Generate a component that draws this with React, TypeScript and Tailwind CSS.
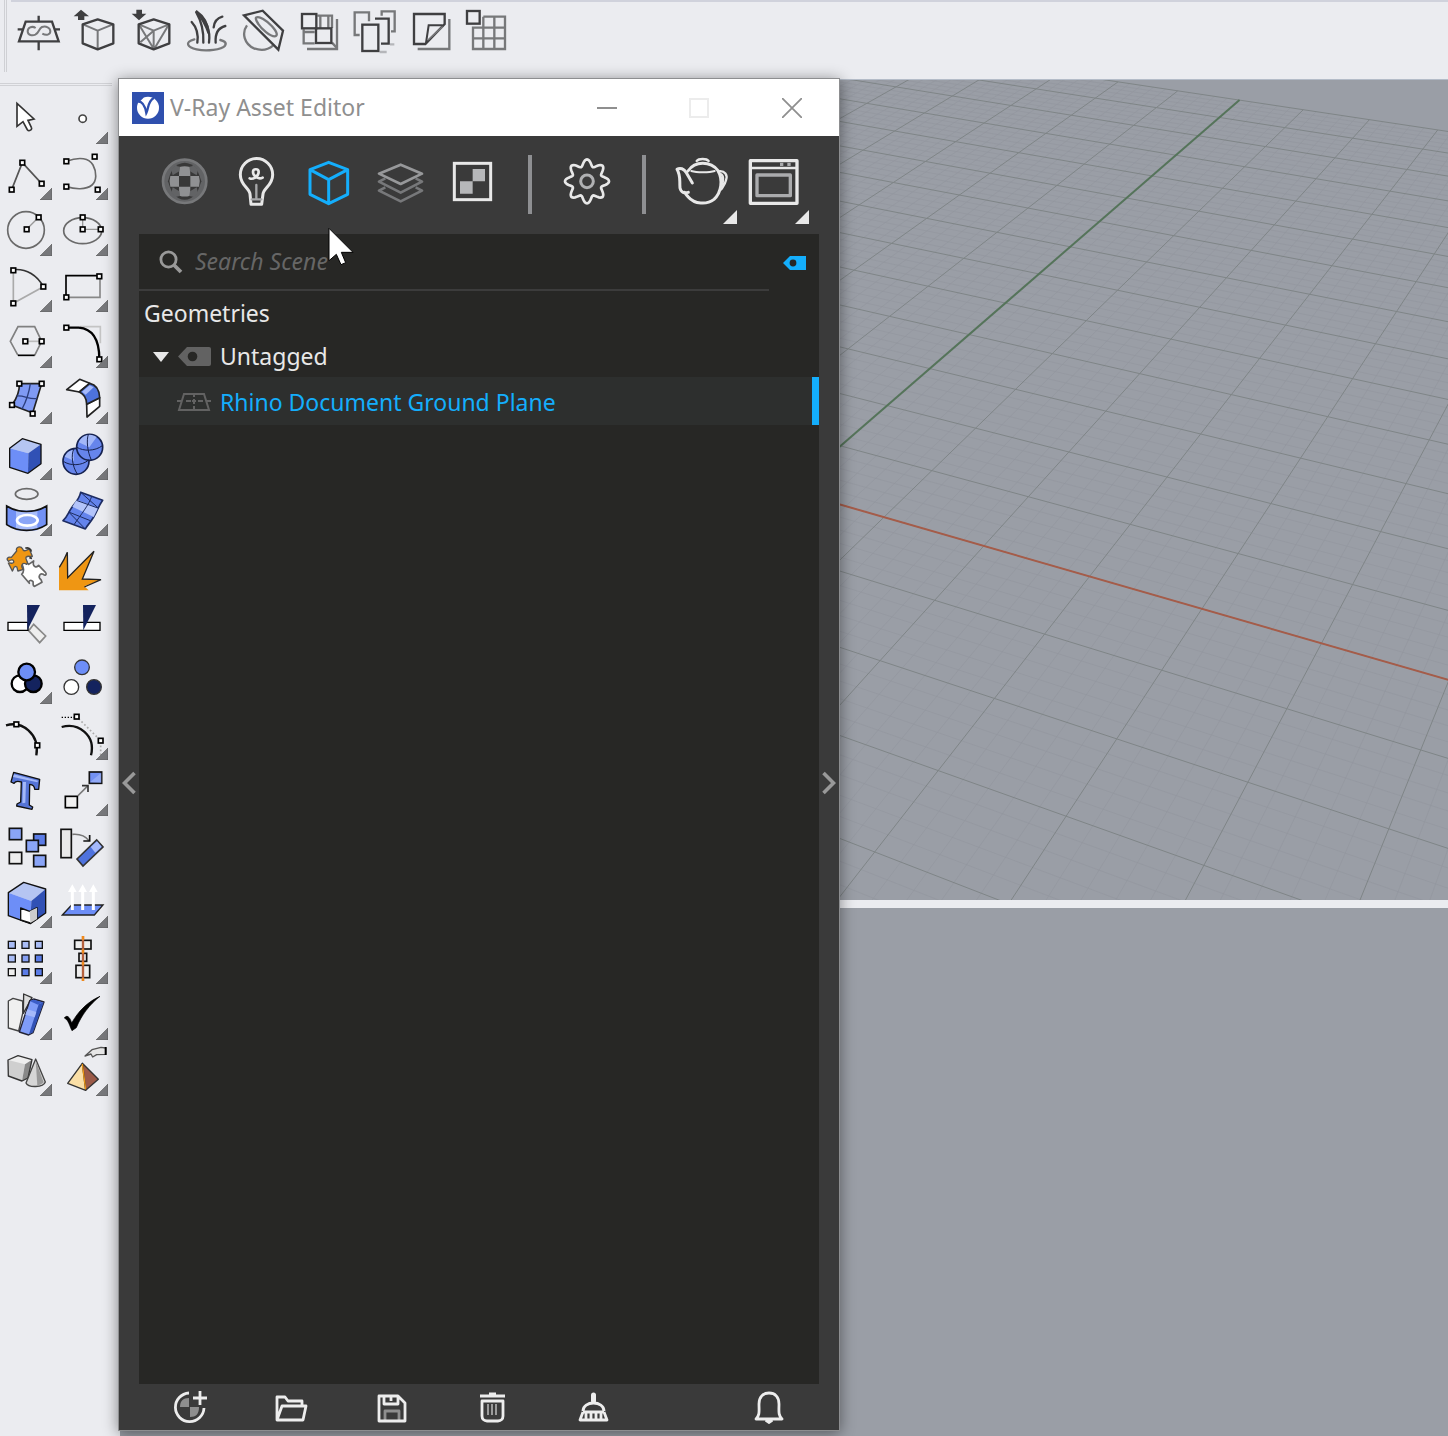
import type { ReactNode } from 'react';

type Tool = {
  label: string;
  box: string;
  art: ReactNode;
  menu?: boolean;
};

const DARK = '#3f3f41';
const MID = '#77787a';

const Handle = ({ x, y }: { x: number; y: number }) => (
  <rect x={x - 7} y={y - 7} width={14} height={14} fill="#fff" stroke="#000" strokeWidth={5} />
);

// Icons of the V-Ray toolbar, drawn at three units per pixel
const topTools: Tool[] = [
  {
    label: 'Infinite plane',
    box: '33 12 168 168',
    art: (
      <g fill="none" stroke={DARK} strokeWidth={7}>
        <path d="M77 65H156L176 124H57ZM116 47V65M116 124V151M53 88H70M163 88H180" />
        <path d="M107 84C95 76 83 84 83 94C83 106 97 108 106 104C118 98 116 86 126 81C138 77 151 83 151 94C151 104 139 108 127 101" stroke={MID} strokeWidth={6} />
      </g>
    ),
  },
  {
    label: 'Export proxy',
    box: '201 12 168 168',
    art: (
      <g fill="none" stroke={DARK} strokeWidth={7} strokeLinejoin="round">
        <path d="M293 92V146M249 73L293 92L339 73" stroke={MID} strokeWidth={6} />
        <path d="M293 58L340 73V130L293 148L248 130V73Z" />
        <path d="M243 29L267 49H253V60H234V49H221Z" fill={DARK} stroke="none" />
      </g>
    ),
  },
  {
    label: 'Import proxy',
    box: '369 12 168 168',
    art: (
      <g fill="none" stroke={DARK} strokeWidth={7} strokeLinejoin="round">
        <path d="M461 92V146M417 73L461 92L507 73L463 146M419 77L461 146M461 92L421 127" stroke={MID} strokeWidth={6} />
        <path d="M461 58L508 73V130L461 148L416 130V73Z" />
        <path d="M417 61L395 41H409V29H426V41H439Z" fill={DARK} stroke="none" />
      </g>
    ),
  },
  {
    label: 'Fur',
    box: '537 12 168 168',
    art: (
      <g fill="none" stroke={DARK} strokeWidth={7} strokeLinecap="round">
        <path d="M583 118C552 126 562 142 590 148C620 155 665 149 675 137C682 126 669 122 661 120" stroke={MID} />
        <path d="M575 66C590 82 596 100 592 128M610 128C612 90 602 60 588 35C617 58 632 90 627 128M641 82C643 62 653 54 667 50M647 128C645 100 656 83 676 78" />
        <path d="M588 33C610 48 624 68 626 100C617 74 606 54 588 33Z" fill={DARK} />
      </g>
    ),
  },
  {
    label: 'Clipper',
    box: '705 12 168 168',
    art: (
      <g fill="none" stroke={DARK} strokeWidth={7}>
        <path d="M741 76C724 99 733 132 762 145C786 154 807 147 819 137" stroke={MID} />
        <path d="M732 46L788 32L849 92L835 149Z" />
        <path d="M768 53C777 47 800 61 816 79C831 96 835 107 824 109C810 109 785 88 775 72C769 63 766 57 768 53Z" stroke={MID} />
      </g>
    ),
  },
  {
    label: 'Decal',
    box: '873 12 168 168',
    art: (
      <g fill="none" stroke={MID} strokeWidth={7}>
        <path d="M952 47H996V84M961 47V84M911 88V130H944M911 96H944M1011 57V147H921" />
        <path d="M985 47V84M996 128L1009 142" />
        <g stroke={DARK}>
          <rect x={906} y={42} width={43} height={43} />
          <rect x={948} y={85} width={46} height={44} />
        </g>
      </g>
    ),
  },
  {
    label: 'Scatter',
    box: '1041 12 168 168',
    art: (
      <g fill="none" stroke={MID} strokeWidth={7}>
        <path d="M1107 64V37H1064V105H1079M1145 47V34H1184V94H1173" />
        <path d="M1139 156H1160M1170 133H1183" stroke="#b5b6ba" />
        <path d="M1125 56H1166V131H1143" stroke={DARK} />
        <rect x={1087} y={74} width={48} height={79} stroke={DARK} />
      </g>
    ),
  },
  {
    label: 'Instance UVW',
    box: '1209 12 168 168',
    art: (
      <g fill="none" stroke={MID} strokeWidth={7}>
        <path d="M1348 57V147H1253" />
        <path d="M1334 42V72L1276 132H1242V42Z" stroke={DARK} />
        <path d="M1328 76H1286L1278 129" stroke={DARK} strokeWidth={6} />
        <path d="M1328 80L1284 120" strokeWidth={5} />
      </g>
    ),
  },
  {
    label: 'Mesh grid',
    box: '1377 12 168 168',
    art: (
      <g fill="none" stroke={MID} strokeWidth={7}>
        <path d="M1450 50H1515V147H1419V83H1515M1450 50V147M1483 50V147M1419 115H1515" />
        <rect x={1401} y={33} width={38} height={38} stroke={DARK} />
      </g>
    ),
  },
];

// Modelling palette, two columns, drawn at three units per pixel
const sideTools: Tool[] = [
  {
    label: 'Select',
    box: '0 9 168 168',
    art: <path d="M51 55V124L69 110L82 134C87 140 98 134 94 127L84 106L102 102Z" fill="#fff" stroke="#333" strokeWidth={5} />,
  },
  {
    label: 'Point',
    box: '168 9 168 168',
    menu: true,
    art: <circle cx={248} cy={101} r={11} fill="#fff" stroke="#444" strokeWidth={5} />,
  },
  {
    label: 'Polyline',
    box: '0 177 168 168',
    menu: true,
    art: (
      <>
        <path d="M35 314L67 233L125 296" fill="none" stroke="#555" strokeWidth={5} />
        <Handle x={35} y={314} /><Handle x={67} y={233} /><Handle x={125} y={296} />
      </>
    ),
  },
  {
    label: 'Curve',
    box: '168 177 168 168',
    menu: true,
    art: (
      <>
        <path d="M199 229C240 214 268 220 279 240C291 262 290 288 276 300C258 315 225 313 199 305" fill="none" stroke="#6a6a6a" strokeWidth={5} />
        <Handle x={199} y={229} /><Handle x={284} y={215} /><Handle x={199} y={305} /><Handle x={293} y={314} />
      </>
    ),
  },
  {
    label: 'Circle',
    box: '0 345 168 168',
    menu: true,
    art: (
      <>
        <circle cx={78} cy={435} r={55} fill="none" stroke="#6a6a6a" strokeWidth={5} />
        <path d="M80 433L116 397" stroke="#999" strokeWidth={4} />
        <Handle x={80} y={433} /><Handle x={116} y={397} />
      </>
    ),
  },
  {
    label: 'Ellipse',
    box: '168 345 168 168',
    menu: true,
    art: (
      <>
        <ellipse cx={248} cy={437} rx={57} ry={39} fill="none" stroke="#6a6a6a" strokeWidth={5} />
        <path d="M248 397V433H302" fill="none" stroke="#999" strokeWidth={4} />
        <Handle x={248} y={397} /><Handle x={248} y={433} /><Handle x={302} y={433} />
      </>
    ),
  },
  {
    label: 'Arc',
    box: '0 513 168 168',
    menu: true,
    art: (
      <>
        <path d="M40 556V655L130 605" fill="none" stroke="#aaa" strokeWidth={5} />
        <path d="M40 554C80 550 112 572 130 605" fill="none" stroke="#333" strokeWidth={5} />
        <Handle x={40} y={556} /><Handle x={40} y={655} /><Handle x={130} y={605} />
      </>
    ),
  },
  {
    label: 'Rectangle',
    box: '168 513 168 168',
    menu: true,
    art: (
      <>
        <path d="M199 637H300V574" fill="none" stroke="#888" strokeWidth={5} />
        <path d="M198 637V572H299" fill="none" stroke="#000" strokeWidth={5} />
        <Handle x={298} y={574} /><Handle x={199} y={637} />
      </>
    ),
  },
  {
    label: 'Polygon',
    box: '0 6 168 168',
    menu: true,
    art: (
      <>
        <path d="M104 136L125 94L104 50H54L31 94L54 136" fill="none" stroke="#808080" strokeWidth={5} />
        <path d="M54 136H104" stroke="#000" strokeWidth={5} />
        <path d="M76 94H125" stroke="#bbb" strokeWidth={5} />
        <Handle x={76} y={94} /><Handle x={125} y={94} />
      </>
    ),
  },
  {
    label: 'Fillet',
    box: '168 6 168 168',
    menu: true,
    art: (
      <>
        <path d="M240 50H301V100" fill="none" stroke="#c4c4c4" strokeWidth={5} />
        <path d="M199 53H236C276 56 298 88 298 147" fill="none" stroke="#000" strokeWidth={7} />
        <Handle x={199} y={53} /><Handle x={298} y={148} />
      </>
    ),
  },
  {
    label: 'Surface from points',
    box: '0 174 168 168',
    menu: true,
    art: (
      <>
        <path d="M58 221H125L98 309L36 285C50 265 59 245 58 221Z" fill="#7f9af4" stroke="#222" strokeWidth={5} />
        <path d="M91 221C87 250 78 275 66 297M50 258C72 255 90 270 112 265" fill="none" stroke="#2b3d7c" strokeWidth={4} />
        <Handle x={58} y={221} /><Handle x={125} y={221} /><Handle x={36} y={285} /><Handle x={98} y={311} />
      </>
    ),
  },
  {
    label: 'Fillet surface',
    box: '168 174 168 168',
    menu: true,
    art: (
      <g stroke="#222" strokeWidth={5} strokeLinejoin="round">
        <path d="M200 239L239 208L269 220L238 246Z" fill="#fff" />
        <path d="M260 283L299 263V289L261 321Z" fill="#fff" />
        <path d="M238 246L269 220C288 224 298 240 299 263L260 283C260 266 253 253 238 246Z" fill="#4d72dc" />
        <path d="M246 245L269 226L281 232L257 254Z" fill="#a5b9fa" stroke="none" />
      </g>
    ),
  },
  {
    label: 'Box',
    box: '0 342 168 168',
    menu: true,
    art: (
      <g strokeLinejoin="round">
        <path d="M29 415L67 386L123 403L85 430Z" fill="#b5c5f2" />
        <path d="M29 415L85 430L84 490L29 472Z" fill="#6d8ef7" />
        <path d="M85 430L123 403V461L84 490Z" fill="#3151b5" />
        <path d="M67 386L123 403V461L84 490L29 472V415Z" fill="none" stroke="#111" strokeWidth={4} />
      </g>
    ),
  },
  {
    label: 'Boolean union',
    box: '168 342 168 168',
    menu: true,
    art: (
      <g stroke="#16224f" strokeWidth={5}>
        <circle cx={228} cy={454} r={39} fill="#6685ec" />
        <circle cx={269} cy={412} r={39} fill="#6685ec" />
        <path d="M236 397A36 36 0 0 1 290 381L268 412ZM194 440A36 36 0 0 1 220 419L222 452Z" fill="#a3b8f8" stroke="none" />
        <path d="M231 412C250 424 285 424 307 407M265 373C259 392 262 424 274 450M190 454C210 468 245 468 266 450M222 416C212 434 217 470 232 492" fill="none" strokeWidth={3} />
      </g>
    ),
  },
  {
    label: 'Project curve',
    box: '0 510 168 168',
    menu: true,
    art: (
      <g>
        <ellipse cx={80} cy={552} rx={34} ry={16} fill="none" stroke="#6a6a6a" strokeWidth={5} />
        <path d="M20 588C54 610 105 610 140 588V644C105 667 54 667 20 644Z" fill="#7291f5" />
        <path d="M48 600H112V661C91 665 67 665 48 661Z" fill="#a7bcfb" />
        <path d="M20 588C54 610 105 610 140 588V644C105 667 54 667 20 644Z" fill="none" stroke="#111" strokeWidth={5} />
        <ellipse cx={82} cy={631} rx={31} ry={16} fill="#8aa5f7" stroke="#fff" strokeWidth={8} />
      </g>
    ),
  },
  {
    label: 'Patch surface',
    box: '168 510 168 168',
    menu: true,
    art: (
      <g stroke="#1d2c62" strokeWidth={5} strokeLinejoin="round">
        <path d="M242 547L308 571C296 588 292 602 281 621C269 641 262 645 256 657L189 632C203 620 205 606 217 590C231 572 238 566 242 547Z" fill="#6484ec" />
        <path d="M217 590L281 621L294 594L230 569Z" fill="#b3c4fa" stroke="none" />
        <path d="M275 559C268 583 242 615 222 644M229 571L296 595M206 606L271 632M242 547L296 595M207 607L256 657" fill="none" strokeWidth={3} />
      </g>
    ),
  },
  {
    label: 'Join',
    box: '0 3 168 168',
    art: (
      <g strokeWidth={5} strokeLinejoin="round">
        <path d="M66 88C61 79 72 73 80 82L86 88L101 78C96 96 110 99 116 91L137 113C141 118 136 124 130 118C120 113 112 126 123 134L126 142L104 154C96 152 101 145 99 140C92 132 84 138 88 145L65 118C72 111 74 103 66 88Z" fill="#fff" stroke="#666" />
        <path d="M50 48C45 36 62 31 68 42C71 52 79 45 88 42L97 64C90 66 85 60 78 67C75 76 88 82 80 88C68 80 60 91 70 103L54 108C50 103 55 96 47 94C38 94 43 103 37 108L25 84C32 81 35 89 41 82C43 74 34 72 26 79C17 73 23 64 34 67Z" fill="#ef9613" stroke="#555" strokeWidth={4} />
        <path d="M76 40C84 36 93 42 94 50M88 68L96 70" fill="none" stroke="#333" />
      </g>
    ),
  },
  {
    label: 'Explode',
    box: '168 3 168 168',
    art: (
      <g>
        <path d="M177 166V99C188 84 196 68 202 52L203 128L282 49L247 132L303 134L253 154L266 166Z" fill="#ef9613" />
        <path d="M178 97C188 82 196 68 202 52L203 128L282 49L247 132L303 134L253 156" fill="none" stroke="#222" strokeWidth={4} />
      </g>
    ),
  },
  {
    label: 'Trim',
    box: '0 171 168 168',
    art: (
      <g>
        <path d="M86 287L101 268L137 303L119 323Z" fill="#eee" stroke="#888" strokeWidth={5} />
        <path d="M24 262H84V286H24Z" fill="#fff" stroke="#000" strokeWidth={4} />
        <path d="M81 210H120L82 286Z" fill="#14235e" />
      </g>
    ),
  },
  {
    label: 'Split',
    box: '168 171 168 168',
    art: (
      <g>
        <path d="M192 262H300V286H192Z" fill="#fff" stroke="#000" strokeWidth={4} />
        <path d="M249 210H288L250 286Z" fill="#14235e" />
      </g>
    ),
  },
  {
    label: 'Group',
    box: '0 339 168 168',
    menu: true,
    art: (
      <g stroke="#000" strokeWidth={7}>
        <circle cx={60} cy={446} r={25} fill="#fff" />
        <circle cx={100} cy={446} r={25} fill="#14235e" />
        <circle cx={80} cy={411} r={25} fill="#6d8ef7" />
      </g>
    ),
  },
  {
    label: 'Ungroup',
    box: '168 339 168 168',
    art: (
      <g stroke="#333" strokeWidth={4}>
        <circle cx={246} cy={397} r={22} fill="#6d8ef7" />
        <circle cx={214} cy={456} r={22} fill="#fff" />
        <circle cx={282} cy={456} r={22} fill="#14235e" />
      </g>
    ),
  },
  {
    label: 'Edit points',
    box: '0 507 168 168',
    art: (
      <>
        <path d="M18 571C65 557 120 595 109 661" fill="none" stroke="#111" strokeWidth={7} />
        <Handle x={49} y={568} /><Handle x={112} y={631} />
      </>
    ),
  },
  {
    label: 'Control points',
    box: '168 507 168 168',
    menu: true,
    art: (
      <>
        <path d="M185 576C235 562 288 600 273 661" fill="none" stroke="#111" strokeWidth={7} />
        <path d="M185 547H225" stroke="#000" strokeWidth={4} strokeDasharray="4 5" />
        <path d="M236 551L302 617V660" fill="none" stroke="#aaa" strokeWidth={5} strokeDasharray="5 7" />
        <Handle x={230} y={545} /><Handle x={302} y={617} />
      </>
    ),
  },
  {
    label: 'Text',
    box: '0 0 168 168',
    art: (
      <g strokeLinejoin="round">
        <path d="M41 37L119 58L116 88L104 88C104 77 98 74 89 73L88 135L98 141L96 148L50 138L51 132L62 126L64 66C52 62 46 63 42 70L33 66Z" fill="#5574d6" stroke="#111" strokeWidth={4} />
        <path d="M42 43L114 62L112 67L39 51ZM69 66H78L76 128L67 130Z" fill="#a3b8f8" />
      </g>
    ),
  },
  {
    label: 'Move',
    box: '168 0 168 168',
    menu: true,
    art: (
      <g strokeWidth={5}>
        <rect x={196} y={109} width={36} height={34} fill="#f0f0f0" stroke="#000" />
        <rect x={268} y={36} width={37} height={34} fill="#7391f3" stroke="#111" />
        <path d="M270 67L304 38V68Z" fill="#a5b9fa" opacity={0.6} />
        <path d="M233 108L264 77" stroke="#777" />
        <path d="M246 77H264V96" fill="none" stroke="#333" />
      </g>
    ),
  },
  {
    label: 'Copy',
    box: '0 168 168 168',
    art: (
      <g stroke="#111" strokeWidth={5}>
        <rect x={28} y={205} width={37} height={34} fill="#8aa5f7" />
        <rect x={101} y={222} width={36} height={34} fill="#5b7ce6" />
        <rect x={79} y={241} width={36} height={34} fill="#8aa5f7" />
        <rect x={28} y={277} width={37} height={34} fill="#eee" />
        <rect x={101} y={286} width={36} height={34} fill="#8aa5f7" />
      </g>
    ),
  },
  {
    label: 'Rotate',
    box: '168 168 168 168',
    art: (
      <g strokeWidth={5}>
        <rect x={183} y={208} width={31} height={85} fill="#e9e9e9" stroke="#111" />
        <path d="M217 223C240 221 258 230 267 242" fill="none" stroke="#777" />
        <path d="M269 225V243H250" fill="none" stroke="#111" />
        <path d="M231 297L290 240L309 261L249 318Z" fill="#4f73de" stroke="#333" />
        <path d="M272 261L291 244L305 260L286 278Z" fill="#a5b9fa" />
      </g>
    ),
  },
  {
    label: 'Solid tools',
    box: '0 336 168 168',
    menu: true,
    art: (
      <g strokeLinejoin="round">
        <path d="M25 398L71 367L137 387L94 423Z" fill="#b5c5f2" />
        <path d="M25 398L94 423L91 491L25 467Z" fill="#6d8ef7" />
        <path d="M94 423L137 387V459L91 491Z" fill="#3151b5" />
        <path d="M71 367L137 387V459L91 491L25 467V398Z" fill="none" stroke="#111" strokeWidth={4} />
        <path d="M62 444L89 454L111 443V477L91 489L62 480Z" fill="#fff" stroke="#111" strokeWidth={4} />
        <path d="M89 454L111 443V477L91 489Z" fill="#ccc" />
      </g>
    ),
  },
  {
    label: 'Extrude',
    box: '168 336 168 168',
    menu: true,
    art: (
      <g>
        <path d="M187 465L215 435H309L283 465Z" fill="#6d8ef7" stroke="#222" strokeWidth={4} />
        <path d="M217 450V392M248 450V392M280 450V392" stroke="#fff" strokeWidth={9} />
        <path d="M204 396L217 373L230 396ZM235 396L248 373L261 396ZM267 396L280 373L293 396Z" fill="#fff" />
      </g>
    ),
  },
  {
    label: 'Array',
    box: '0 -6 168 168',
    menu: true,
    art: (
      <g stroke="#111" strokeWidth={4} fill="#a9bcf5">
        <rect x={25} y={34} width={21} height={21} /><rect x={66} y={34} width={21} height={21} /><rect x={106} y={34} width={21} height={21} />
        <rect x={25} y={75} width={21} height={21} /><rect x={66} y={75} width={21} height={21} fill="#86a0f3" /><rect x={106} y={75} width={21} height={21} fill="#5b7ce6" />
        <rect x={25} y={116} width={21} height={21} fill="#eee" /><rect x={66} y={116} width={21} height={21} fill="#5b7ce6" /><rect x={106} y={116} width={21} height={21} fill="#5b7ce6" />
      </g>
    ),
  },
  {
    label: 'Align',
    box: '168 -6 168 168',
    menu: true,
    art: (
      <g fill="#eee" stroke="#111" strokeWidth={5}>
        <rect x={224} y={31} width={49} height={26} /><rect x={237} y={70} width={23} height={24} /><rect x={228} y={106} width={41} height={37} />
        <path d="M249 18V153" stroke="#b5613e" strokeWidth={7} />
        <path d="M249 18V30M249 58V70M249 95V106M249 144V153" stroke="#f08a1c" strokeWidth={7} />
      </g>
    ),
  },
  {
    label: 'Bend',
    box: '0 162 168 168',
    menu: true,
    art: (
      <g strokeWidth={4} strokeLinejoin="round">
        <path d="M71 192L96 203L70 250Z" fill="#ddd" stroke="#333" />
        <path d="M25 213L39 205L68 213V250L56 303L25 294Z" fill="#f0f0f0" stroke="#444" />
        <path d="M89 212L101 207L132 216L99 308L86 315L58 306Z" fill="#7f9cf7" stroke="#223" />
        <path d="M116 223L131 217L99 307L87 313Z" fill="#3151b5" />
        <path d="M89 213L101 209L128 217L114 224Z" fill="#3c5ec8" />
        <path d="M82 238L109 246L104 262L76 254Z" fill="#a5b9fa" />
      </g>
    ),
  },
  {
    label: 'Check',
    box: '168 162 168 168',
    menu: true,
    art: <path d="M193 264C200 254 209 259 215 279C235 243 265 214 300 199C269 223 244 256 229 293L216 302C209 289 206 270 193 264Z" fill="#000" stroke="#000" strokeWidth={2} />,
  },
  {
    label: 'Render solids',
    box: '0 330 168 168',
    menu: true,
    art: (
      <g strokeWidth={4} strokeLinejoin="round">
        <path d="M24 390L54 377L96 389L75 403Z" fill="#eee" />
        <path d="M24 390L75 403L66 453L25 438Z" fill="#cfcfcf" />
        <path d="M75 403L96 389L84 444L66 453Z" fill="#888" />
        <path d="M24 390L54 377L96 389L84 444L66 453L25 438Z" fill="none" stroke="#333" />
        <path d="M107 387L136 456C130 473 85 474 78 459Z" fill="#d6d6d6" stroke="#444" />
        <path d="M107 392L131 457C126 463 118 465 112 466Z" fill="#999" />
      </g>
    ),
  },
  {
    label: 'Pyramid options',
    box: '168 330 168 168',
    menu: true,
    art: (
      <g strokeLinejoin="round">
        <path d="M247 400L295 448L257 481Z" fill="#9b5a48" stroke="#333" strokeWidth={4} />
        <path d="M247 400L257 481L203 460Z" fill="#fadfa6" stroke="#333" strokeWidth={4} />
        <path d="M247 402L257 478" stroke="#ef9613" strokeWidth={4} />
        <path d="M255 378L276 359L303 352L317 354V373L290 374L278 381L273 372Z" fill="#e6e6e6" stroke="#555" strokeWidth={4} />
        <path d="M317 351V375" stroke="#000" strokeWidth={6} />
      </g>
    ),
  },
];

const gearPath =
  Array.from({ length: 128 }, (_, i) => {
    const t = (i / 128) * Math.PI * 2;
    const r = 56 + 10 * Math.cos(8 * t);
    return `${i ? 'L' : 'M'}${(321 + r * Math.cos(t)).toFixed(1)} ${(334 + r * Math.sin(t)).toFixed(1)}`;
  }).join('') + 'Z';

const categories: Tool[] = [
  {
    label: 'Materials',
    box: '93 234 216 228',
    art: (
      <g>
        <circle cx={200} cy={334} r={65} fill="#626365" stroke="#77787a" strokeWidth={8} />
        <path d="M164 297Q200 260 236 297L244 316L250 334L242 356L236 371Q200 407 164 371L156 352L150 334L156 314Z" fill="#383838" />
        <path d="M184 291Q200 286 216 291L217 318H183ZM184 377Q200 382 216 377L217 350H183ZM157 318Q152 334 157 350L183 350V318ZM243 318Q248 334 243 350L217 350V318Z" fill="#909193" />
        <path d="M160 299L172 287L186 290L184 304L164 316ZM240 299L228 287L214 290L216 304L236 316ZM160 369L172 381L186 378L184 364L164 352ZM240 369L228 381L214 378L216 364L236 352Z" fill="#626365" />
      </g>
    ),
  },
  {
    label: 'Lights',
    box: '309 234 216 228',
    art: (
      <g fill="none" stroke="#e8e8e8" strokeWidth={9} strokeLinejoin="round" strokeLinecap="round">
        <path d="M399 403L396 372C394 355 367 345 367 314A48 48 0 0 1 464 314C464 345 437 355 435 372L431 403Z" />
        <path d="M395 325C405 330 422 318 422 306C422 295 405 295 405 306C405 318 422 330 434 323" strokeWidth={8} />
        <path d="M415 345V388M401 388H430" stroke="#a7a8aa" strokeWidth={7} />
      </g>
    ),
  },
  {
    label: 'Geometries',
    box: '525 234 216 228',
    art: (
      <path d="M632 277L689 299V373L632 401L576 373V299ZM576 299L632 329L689 299M632 329V401" fill="none" stroke="#14aefc" strokeWidth={9} strokeLinejoin="round" />
    ),
  },
  {
    label: 'Render elements',
    box: '741 234 216 228',
    art: (
      <g fill="none" strokeWidth={8} strokeLinejoin="round">
        <path d="M802 352L783 362L848 394L912 362L893 352M802 325L783 335L848 368L912 335L893 325" stroke="#77787a" />
        <path d="M848 284L912 311L848 342L783 311Z" stroke="#97989a" />
      </g>
    ),
  },
  {
    label: 'Textures',
    box: '957 234 216 228',
    art: (
      <g>
        <rect x={1009} y={280} width={109} height={109} fill="none" stroke="#e8e8e8" strokeWidth={9} />
        <path d="M1064 297H1101V334H1064ZM1026 334H1064V371H1026Z" fill="#b6b7b9" />
      </g>
    ),
  },
];

const settings: Tool = {
  label: 'Settings',
  box: '213 234 216 228',
  art: (
    <g fill="none">
      <path d={gearPath} stroke="#e8e8e8" strokeWidth={8} />
      <circle cx={321} cy={334} r={19} stroke="#b0b1b3" strokeWidth={9} />
    </g>
  ),
};

const renderTools: Tool[] = [
  {
    label: 'Render',
    box: '555 234 216 228',
    menu: true,
    art: (
      <g fill="none" stroke="#e8e8e8" strokeWidth={9} strokeLinecap="round" strokeLinejoin="round">
        <path d="M624 303C636 286 652 280 668 280C684 280 702 286 714 302C730 330 724 368 702 388C680 405 644 403 624 380C618 374 616 370 614 367M637 339L619 308C612 296 600 292 591 298C603 318 598 330 600 354C603 368 613 370 625 367" />
        <path d="M650 273C656 265 680 265 686 273M715 304C735 301 744 315 738 331C735 344 728 350 724 358M722 312C732 316 730 334 726 344" strokeWidth={7} />
        <path d="M634 303C650 308 688 308 704 303" strokeWidth={6} />
      </g>
    ),
  },
  {
    label: 'Frame buffer',
    box: '771 234 216 228',
    menu: true,
    art: (
      <g fill="none" stroke="#e8e8e8" strokeWidth={10} strokeLinejoin="round">
        <path d="M811 272H951V400H811Z" />
        <path d="M812 294H950" strokeWidth={8} />
        <path d="M900 283H910M922 283H932" stroke="#aaabad" strokeWidth={10} />
        <rect x={831} y={315} width={100} height={62} stroke="#aaabad" />
      </g>
    ),
  },
];

const footerTools = [
  {
    label: 'Create asset',
    art: (
      <>
        <path d="M19 11V20H10C10 14 13 11 19 11ZM20 20H29C29 27 26 30 20 30Z" fill="#8e8e8e" stroke="none" />
        <path d="M19 6A14.300 14.300 0 1 0 34 21M30 4V18M23 11H37" />
      </>
    ),
  },
  {
    label: 'Open',
    art: <path d="M6 33V10H14L17 14H31V19M6 33L11 19H35L32 33Z" />,
  },
  {
    label: 'Save',
    art: (
      <>
        <path d="M13 34V24H27V34" stroke="#8e8e8e" />
        <path d="M7 9H26L33 16V34H7ZM12 10V17H26V10M19 10V14" />
      </>
    ),
  },
  {
    label: 'Delete',
    art: (
      <>
        <path d="M15 17V28M19 17V28M23 17V28" stroke="#9b9b9b" strokeWidth={2} />
        <path d="M7 9H32M16 7H23M9 14H30V29C30 32 28 34 25 34H14C11 34 9 32 9 29Z" />
      </>
    ),
  },
  {
    label: 'Purge',
    art: (
      <>
        <path d="M19.500 8V14" strokeWidth={5} strokeLinecap="round" />
        <path d="M9 24C9 19 14 16 19.500 16C25 16 30 19 30 24M9 25H30M9 25L6 33H33L30 25M12 26V32M17 26V32M22 26V32M27 26V32" />
      </>
    ),
  },
];

const BellArt = (
  <>
    <path d="M7 32C11 28 10 24 10 17C10 10 14 6 20 6C26 6 30 10 30 17C30 24 29 28 33 32Z" />
    <path d="M17 34H23L20 36Z" strokeWidth={2} />
  </>
);

// Perspective projection of a construction plane point, in major grid cells
const project = (i: number, j: number) => {
  const w = 1 - 0.02761 * i + 0.047 * j;
  const x = (93.06 * i + 50.9 * j - 50.27) / w;
  const y = (15.1 * i - 26.9 * j + 410) / w;
  return `${x.toFixed(1)} ${y.toFixed(1)}`;
};

const SUBDIVISIONS = 5;
const FIRST_ROW = -8;
const LAST_ROW = 14;
const FIRST_COLUMN = -14;
const LAST_COLUMN = 10;

const gridPath = (major: boolean) => {
  let d = '';
  for (let n = FIRST_COLUMN * SUBDIVISIONS; n <= LAST_COLUMN * SUBDIVISIONS; n++) {
    if ((n % SUBDIVISIONS === 0) !== major) continue;
    d += `M${project(n / SUBDIVISIONS, FIRST_ROW)}L${project(n / SUBDIVISIONS, LAST_ROW)}`;
  }
  for (let n = FIRST_ROW * SUBDIVISIONS; n <= LAST_ROW * SUBDIVISIONS; n++) {
    if ((n % SUBDIVISIONS === 0) !== major) continue;
    d += `M${project(FIRST_COLUMN, n / SUBDIVISIONS)}L${project(LAST_COLUMN, n / SUBDIVISIONS)}`;
  }
  return d;
};

const PerspectiveView = () => (
  <div className="min-h-0 overflow-hidden border-t border-[#b4bcc8] bg-[#9a9ea6]">
    <svg className="block h-full w-full" aria-label="Perspective view">
      <g transform="translate(720 0)" fill="none">
        <path d={gridPath(false)} stroke="#92969d" strokeWidth={0.6} />
        <path d={gridPath(true)} stroke="#7f8587" strokeWidth={1} />
        <path d={`M${project(0, 0)}L${project(0, LAST_ROW)}`} stroke="#55745a" strokeWidth={2} />
        <path d={`M${project(0, 0)}L${project(LAST_COLUMN, 0)}`} stroke="#a55c49" strokeWidth={2} />
      </g>
    </svg>
  </div>
);

const ToolButton = ({ tool }: { tool: Tool }) => (
  <button type="button" aria-label={tool.label} className="relative h-14 w-14 hover:bg-black/5">
    <svg viewBox={tool.box} className="h-14 w-14">
      {tool.art}
    </svg>
    {tool.menu && (
      <svg viewBox="0 0 12 12" className="absolute right-1 bottom-0 h-3 w-3">
        <path d="M12 0V12H0Z" fill="#77787b" stroke="#555" strokeWidth={0.6} />
      </svg>
    )}
  </button>
);

const EditorButton = ({ tool }: { tool: Tool }) => (
  <button type="button" aria-label={tool.label} className="relative h-[76px] w-[72px]">
    <svg viewBox={tool.box} className="h-[76px] w-[72px]">
      {tool.art}
    </svg>
    {tool.menu && (
      <svg viewBox="0 0 14 14" className="absolute right-0 bottom-0 h-3.5 w-3.5">
        <path d="M14 0V14H0Z" fill="#e8e8e8" />
      </svg>
    )}
  </button>
);

const FooterButton = ({ label, children }: { label: string; children: ReactNode }) => (
  <button type="button" aria-label={label} className="flex w-[101px] items-center justify-center">
    <svg viewBox="0 0 40 40" className="h-10 w-10" fill="none" stroke="#ededed" strokeWidth={2.8} strokeLinejoin="round">
      {children}
    </svg>
  </button>
);

const TitleBar = () => (
  <header className="flex h-[57px] items-center bg-white pl-[13px] text-[#8f8f8f]">
    <svg viewBox="0 0 96 96" className="h-8 w-8">
      <path d="M0 0H96V96H0Z" fill="#2f50ae" />
      <circle cx={48} cy={47} r={33} fill="#fff" />
      <path d="M18 28C33 28 39 40 43 63C50 50 46 28 66 17" fill="none" stroke="#2f50ae" strokeWidth={7} />
      <path d="M16 16H36L20 32Z" fill="#2f50ae" />
    </svg>
    <h1 className="ml-1.5 text-[23px]">V-Ray Asset Editor</h1>
    <div className="ml-auto flex">
      <button type="button" aria-label="Minimize" className="flex h-14 w-[92px] items-center justify-center">
        <svg viewBox="0 0 20 20" className="h-5 w-5"><path d="M0 10H20" stroke="currentColor" strokeWidth={2} /></svg>
      </button>
      <button type="button" aria-label="Maximize" disabled className="flex h-14 w-[92px] items-center justify-center">
        <svg viewBox="0 0 20 20" className="h-5 w-5"><path d="M1 1H19V19H1Z" fill="none" stroke="#ececec" strokeWidth={2} /></svg>
      </button>
      <button type="button" aria-label="Close" className="flex h-14 w-[94px] items-center justify-center">
        <svg viewBox="0 0 20 20" className="h-5 w-5"><path d="M0 0L20 20M20 0L0 20" stroke="currentColor" strokeWidth={1.8} /></svg>
      </button>
    </div>
  </header>
);

const AssetEditor = () => (
  <section className="absolute top-[78px] bottom-[5px] left-[118px] flex w-[722px] flex-col border border-[#8d8e90] bg-[#3a3a3a] shadow-[0_2px_14px_rgba(0,0,0,0.45)]">
    <TitleBar />
    <div className="flex min-h-0 flex-1">
      <button type="button" aria-label="Open left panel" className="flex w-5 items-center justify-center">
        <svg viewBox="0 0 14 24" className="h-6 w-3.5"><path d="M12.500 2L2.500 12L12.500 22" fill="none" stroke="#999" strokeWidth={3.6} /></svg>
      </button>
      <div className="flex min-w-0 flex-1 flex-col">
        <nav className="flex h-[98px] items-start pt-3 pl-2.5">
          {categories.map((tool) => (
            <EditorButton key={tool.label} tool={tool} />
          ))}
          <div className="mx-[19px] mt-[7px] h-[59px] w-1 bg-[#8e8f92]" />
          <EditorButton tool={settings} />
          <div className="mx-[19px] mt-[7px] h-[59px] w-1 bg-[#8e8f92]" />
          {renderTools.map((tool) => (
            <EditorButton key={tool.label} tool={tool} />
          ))}
        </nav>

        <div className="min-h-0 flex-1 bg-[#272725] text-[23px] text-[#e8e8e8]">
          <div className="flex h-[57px]">
            <label className="flex flex-1 items-center border-b-2 border-[#3c3c3c] pl-5">
              <svg viewBox="0 0 24 24" className="h-6 w-6" fill="none" stroke="#999">
                <circle cx={9.5} cy={9.5} r={7.6} strokeWidth={2.8} />
                <path d="M15 15L22 22" strokeWidth={3.8} />
              </svg>
              <input
                type="text"
                aria-label="Search Scene"
                placeholder="Search Scene"
                className="ml-3 min-w-0 flex-1 bg-transparent italic outline-none placeholder:text-[#666]"
              />
            </label>
            <button type="button" aria-label="Toggle tags" className="flex w-[50px] items-center justify-center">
              <svg viewBox="0 0 23 14" className="h-3.5 w-[23px]">
                <path d="M0 7L7 0H23V14H7Z" fill="#14aefc" />
                <circle cx={10} cy={7} r={3.4} fill="#272725" />
              </svg>
            </button>
          </div>

          <h2 className="h-[45px] pl-[5px] leading-[45px]">Geometries</h2>
          <div className="flex h-[41px] items-center pl-3">
            <button type="button" aria-label="Collapse Untagged">
              <svg viewBox="0 0 20 12" className="h-3 w-5"><path d="M2 1H18L10 11Z" fill="#e8e8e8" /></svg>
            </button>
            <svg viewBox="0 0 33 19" className="ml-[7px] h-[19px] w-[33px]">
              <path d="M0 9.500L9 0H31Q33 0 33 2V17Q33 19 31 19H9Z" fill="#626262" />
              <circle cx={14.5} cy={9.5} r={4.8} fill="#272725" />
            </svg>
            <span className="ml-[9px]">Untagged</span>
          </div>
          <button type="button" className="flex h-12 w-full items-center border-r-[7px] border-[#14aefc] bg-[#2d2f2e] pt-0.5 pl-[38px] text-left text-[#14aefc]">
            <svg viewBox="0 0 34 18" className="h-[18px] w-[34px]" fill="none" stroke="#626262" strokeWidth={2}>
              <path d="M7 1H27L32 17H2ZM17 1V4M17 6V11M17 13V17M0 8H5M9 8H14M15 8H19M21 8H26M29 8H34" />
            </svg>
            <span className="ml-[9px]">Rhino Document Ground Plane</span>
          </button>
        </div>

        <footer className="flex h-[46px]">
          {footerTools.map((tool) => (
            <FooterButton key={tool.label} label={tool.label}>{tool.art}</FooterButton>
          ))}
          <div className="flex-1" />
          <FooterButton label="Notifications">{BellArt}</FooterButton>
        </footer>
      </div>
      <button type="button" aria-label="Open right panel" className="flex w-5 items-center justify-center">
        <svg viewBox="0 0 14 24" className="h-6 w-3.5"><path d="M1.500 2L11.500 12L1.500 22" fill="none" stroke="#999" strokeWidth={3.6} /></svg>
      </button>
    </div>
  </section>
);

const App = () => (
  <div className="relative flex h-screen min-h-[1110px] flex-col overflow-hidden bg-[#ebecf0] font-['Noto_Sans','Open_Sans',sans-serif]">
    <div className="flex h-[79px] shrink-0 pl-1">
      <div className="h-[72px] w-[3px] border-x border-[#cfd0d4]" />
      <div className="ml-1 flex flex-1 items-start border-t-2 border-[#d0d2dc] pt-0.5">
        {topTools.map((tool) => (
          <ToolButton key={tool.label} tool={tool} />
        ))}
      </div>
    </div>

    <div className="flex min-h-0 flex-1">
      <aside className="w-[120px] shrink-0 pt-1">
        <div className="h-[3px] w-28 border-y border-[#d0d1d5]" />
        <div className="grid w-28 grid-cols-2 pt-0.5">
          {sideTools.map((tool) => (
            <ToolButton key={tool.label} tool={tool} />
          ))}
        </div>
      </aside>
      <main className="grid min-w-0 flex-1 grid-rows-[821fr_528fr] gap-2">
        <PerspectiveView />
        <div className="bg-[#9a9ea6]" />
      </main>
    </div>

    <AssetEditor />

    {/* Mouse pointer */}
    <svg viewBox="631 471 78 117" className="pointer-events-none absolute top-[227px] left-[328px] h-[39px] w-[26px]">
      <path d="M634 475V572L656 553L670 584L684 578L671 547H706Z" fill="#fff" stroke="#000" strokeWidth={3} />
    </svg>
  </div>
);

export default App;
